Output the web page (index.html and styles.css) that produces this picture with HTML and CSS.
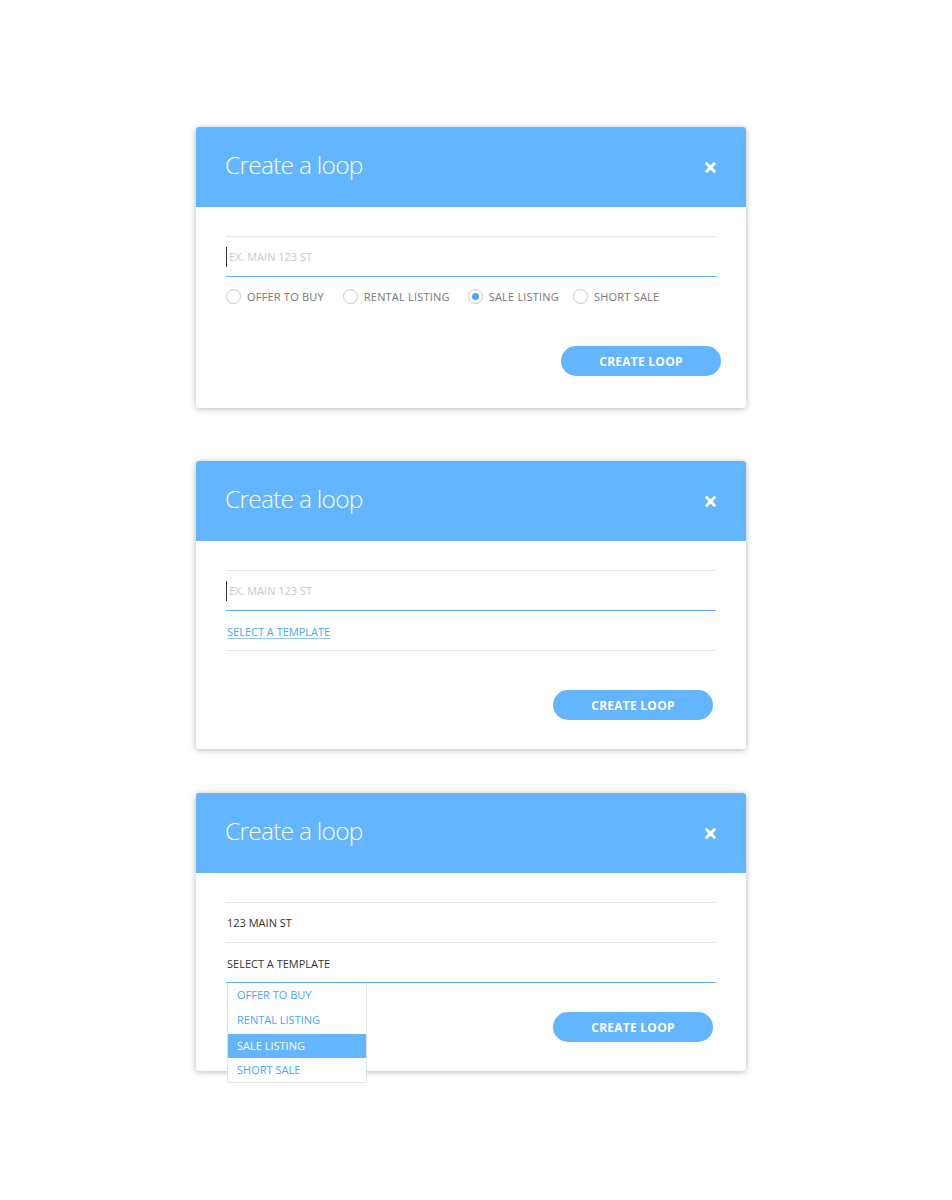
FILE: index.html
```html
<!DOCTYPE html>
<html>
<head>
<meta charset="utf-8">
<link rel="stylesheet" href="styles.css">
</head>
<body>
<div class="page">
  <section class="card card-1">
    <header class="card-head">
      <h1 class="title">Create a loop</h1>
      <span class="close"><svg width="11" height="11" viewBox="0 0 11 11"><path d="M1.8 1.8 L9.2 9.2 M9.2 1.8 L1.8 9.2" stroke="#fff" stroke-width="3" stroke-linecap="square"/></svg></span>
    </header>
    <div class="card-body">
      <div class="field field-active"><span class="caret"></span><span class="placeholder">EX. MAIN 123 ST</span></div>
      <div class="radios">
        <label class="radio"><span class="dot"></span>OFFER TO BUY</label>
        <label class="radio"><span class="dot"></span>RENTAL LISTING</label>
        <label class="radio checked"><span class="dot"></span>SALE LISTING</label>
        <label class="radio"><span class="dot"></span>SHORT SALE</label>
      </div>
      <div class="actions actions-1"><button class="btn">CREATE LOOP</button></div>
    </div>
  </section>

  <section class="card card-2">
    <header class="card-head">
      <h1 class="title">Create a loop</h1>
      <span class="close"><svg width="11" height="11" viewBox="0 0 11 11"><path d="M1.8 1.8 L9.2 9.2 M9.2 1.8 L1.8 9.2" stroke="#fff" stroke-width="3" stroke-linecap="square"/></svg></span>
    </header>
    <div class="card-body">
      <div class="field field-active"><span class="caret"></span><span class="placeholder ph-2">EX. MAIN 123 ST</span></div>
      <div class="field field-plain"><a class="link">SELECT A TEMPLATE</a></div>
      <div class="actions actions-2"><button class="btn">CREATE LOOP</button></div>
    </div>
  </section>

  <section class="card card-3">
    <header class="card-head">
      <h1 class="title">Create a loop</h1>
      <span class="close"><svg width="11" height="11" viewBox="0 0 11 11"><path d="M1.8 1.8 L9.2 9.2 M9.2 1.8 L1.8 9.2" stroke="#fff" stroke-width="3" stroke-linecap="square"/></svg></span>
    </header>
    <div class="card-body">
      <div class="field field-plain field-first"><span class="value">123 MAIN ST</span></div>
      <div class="field field-select"><span class="value value-select">SELECT A TEMPLATE</span>
        <ul class="menu">
          <li class="first">OFFER TO BUY</li>
          <li class="second">RENTAL LISTING</li>
          <li class="selected">SALE LISTING</li>
          <li class="last">SHORT SALE</li>
        </ul>
      </div>
      <div class="actions actions-3"><button class="btn">CREATE LOOP</button></div>
    </div>
  </section>
</div>
</body>
</html>
```

FILE: styles.css
```css
* { box-sizing: border-box; }
html, body { margin: 0; padding: 0; background: #fff; }
body { font-family: "Open Sans", "Liberation Sans", sans-serif; }

.page {
  padding: 127px 0 0 196px;
  width: 952px;
  min-height: 1200px;
}

.card {
  width: 550px;
  background: #fff;
  border-radius: 3px;
  box-shadow: 0 1px 6px rgba(0,0,0,0.28);
}
.card-2 { margin-top: 53px; }
.card-3 { margin-top: 44px; }

.card-head {
  height: 80px;
  background: #63b5fe;
  border-radius: 3px 3px 0 0;
  display: flex;
  align-items: center;
  justify-content: space-between;
  padding: 0 29px 0 29px;
}
.title {
  margin: 0;
  font-weight: 300;
  font-size: 24.5px;
  color: #fff;
  letter-spacing: -0.75px;
  line-height: 1;
  padding-bottom: 3px;
}
.close { display: flex; width: 11px; height: 11px; margin-right: 1px; }

.card-body {
  padding: 29px 29px 29px 30px;
}
.card-1 .card-body { padding-bottom: 32px; }

.field {
  height: 40px;
  border-top: 1px solid #e6e6e6;
  display: flex;
  align-items: center;
  position: relative;
  width: 490px;
}
.field-active { border-bottom: 1px solid #5fb0f8; height: 41px; }
.card-1 .field-active { width: 491px; }
.field-plain { border-bottom: 1px solid #e6e6e6; }
.field-first { height: 41px; }
.field-active + .field-plain { border-top: none; }
.field-select { border-top: none; border-bottom: 1px solid #5fb0f8; }

.caret {
  width: 1px;
  height: 20px;
  background: #333;
  margin-right: 2px;
}
.placeholder {
  font-size: 11px;
  color: #c8c8c8;
}
.link {
  font-size: 11px;
  color: #4aa6f7;
  text-decoration: underline;
  text-underline-offset: 2px;
  text-decoration-color: #8ccaff;
  padding-left: 1px;
  margin-top: 1px;
}
.value {
  font-size: 11px;
  color: #333;
  padding-left: 1px;
}
.value-select { margin-top: 2px; }

.radios {
  display: flex;
  align-items: center;
  margin-top: 11px;
  height: 16px;
}
.radio {
  display: flex;
  align-items: center;
  font-size: 11px;
  color: #777;
  letter-spacing: 0.2px;
  margin-right: 19px;
}
.radio:nth-child(2) { margin-right: 18px; }
.radio:nth-child(3) { margin-right: 14px; }
.dot {
  width: 15px;
  height: 15px;
  border: 1px solid #c9c9c9;
  border-radius: 50%;
  margin-right: 6px;
  display: flex;
  align-items: center;
  justify-content: center;
}
.checked .dot::after {
  content: "";
  width: 7px;
  height: 7px;
  border-radius: 50%;
  background: #4aa6f7;
}

.actions {
  display: flex;
  justify-content: flex-end;
}
.actions-1 { margin-top: 42px; margin-right: -4px; }
.actions-2 { margin-top: 39px; margin-right: 4px; }
.actions-3 { margin-top: 29px; margin-right: 4px; }

.btn {
  width: 160px;
  height: 30px;
  border: none;
  border-radius: 15px;
  background: #63b5fe;
  color: #fff;
  font-family: "Open Sans", "Liberation Sans", sans-serif;
  font-weight: 700;
  font-size: 12px;
  letter-spacing: 0.25px;
  padding: 0;
}

.menu {
  position: absolute;
  left: 1px;
  top: 40px;
  width: 140px;
  margin: 0;
  padding: 0;
  list-style: none;
  background: #fff;
  border: 1px solid #e2e2e2;
  border-top: none;
  z-index: 2;
}
.menu li {
  height: 24px;
  line-height: 23px;
  font-size: 11px;
  color: #4aa6f7;
  padding-left: 9px;
}
.menu li.first { height: 25px; line-height: 24px; }
.menu li.second { height: 26px; line-height: 24px; }
.menu li.selected {
  background: #63b5fe;
  color: #fff;
}
```
